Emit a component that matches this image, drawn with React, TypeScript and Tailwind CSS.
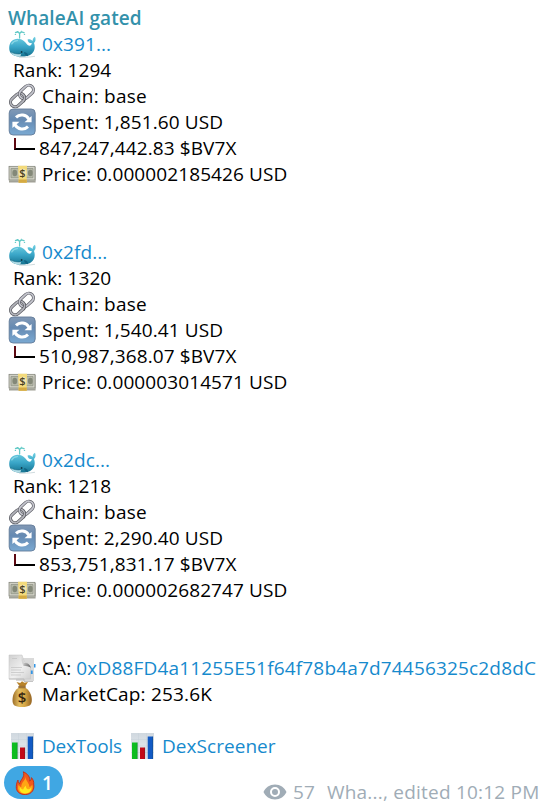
import React from "react";

const iconClass = "block h-[28px] w-[28px] shrink-0";

function Whale() {
  return (
    <svg className={iconClass} viewBox="0 0 28 28">
      <defs>
        <linearGradient id="whale" x1="0" y1="0" x2="0" y2="1">
          <stop offset="0" stopColor="#6fcfe2" />
          <stop offset=".5" stopColor="#3aa6c8" />
          <stop offset="1" stopColor="#14728f" />
        </linearGradient>
      </defs>
      <path d="M7.500 2.600c1.500-.9 3.200-.5 4.100 1c.8-1.600 2.700-2 4.600-.9M11.600 3.600V8" fill="none" stroke="#62c9c6" strokeWidth="1.300" strokeLinecap="round" />
      <path d="M9.400 1.500h.5M13.200 1.300h.5M7.200 4.500h.4M16.300 4.500h.4" stroke="#62c9c6" strokeWidth="1.100" strokeLinecap="round" />
      <path d="M1.200 18C1.200 12.400 4.600 8.800 9.700 8.800c5 0 7.400 3.200 10 6.300c2 1.200 3.900.5 4.100-2c-2.500.1-4.200-1.200-4.200-3.700c2.100-.4 3.800.2 5 1.600c0-2 .8-3.500 2.400-4.300c1 2.500.7 4.600-1 6.300c1.600 4.600.5 8.900-3.200 11.500c-2.300 1.600-5.500 2.200-10 2.100C5 26.500 1.200 23.600 1.200 18z" fill="url(#whale)" />
      <path d="M2 21.600c3.200 2.100 7.200 2.700 11 2.200c.2 1.400-.4 2.400-1.700 2.800C7 26.600 3.600 25 2 21.600z" fill="#b3dde6" />
      <path d="M2 21.500c3.300 2.100 7.200 2.700 11 2.200" fill="none" stroke="#1b6d88" strokeWidth=".7" />
      <path d="M16 22c2.700.2 4.200 1.700 4 4.200c-2.500-.5-3.900-1.900-4-4.200z" fill="#126585" />
      <circle cx="13.600" cy="22" r=".9" fill="#103847" />
      <path d="M3.800 13.800c1.300-2.200 3.200-3.200 5.600-3.200" fill="none" stroke="#a9e8f0" strokeWidth="1.400" strokeLinecap="round" opacity=".6" />
      <path d="M11 27.200c5 .3 10 0 16-.9" stroke="#bccbd0" strokeWidth=".7" fill="none" />
    </svg>
  );
}

function Chain() {
  return (
    <svg className={iconClass} viewBox="0 0 28 28" fill="none">
      <g transform="rotate(-42 14 14) translate(1.100 1.100) scale(.92)">
        <rect x="-1" y="9" width="17" height="10" rx="5" stroke="#595a60" strokeWidth="3.400" />
        <rect x="-1" y="9" width="17" height="10" rx="5" stroke="#b3b4bb" strokeWidth="1.900" />
        <rect x="12" y="9" width="17" height="10" rx="5" stroke="#5f6068" strokeWidth="3.400" />
        <rect x="12" y="9" width="17" height="10" rx="5" stroke="#c5c6ce" strokeWidth="1.900" />
        <path d="M11 19a5 5 0 0 0 5-5" stroke="#595a60" strokeWidth="3.400" />
        <path d="M10.600 19h.4a5 5 0 0 0 5-5v-.4" stroke="#b3b4bb" strokeWidth="1.900" />
      </g>
    </svg>
  );
}

function Refresh() {
  return (
    <svg className={iconClass} viewBox="0 0 28 28">
      <defs>
        <linearGradient id="refresh" x1="0" y1="0" x2="0" y2="1">
          <stop offset="0" stopColor="#8299b5" />
          <stop offset=".4" stopColor="#668ab2" />
          <stop offset="1" stopColor="#7aa9d2" />
        </linearGradient>
      </defs>
      <rect x="1.200" y="1" width="26" height="26" rx="4" fill="url(#refresh)" stroke="#627b98" strokeWidth=".9" />
      <path d="M8 9.300A8.200 8.200 0 0 1 20.900 11.300M20 18.700A8.200 8.200 0 0 1 7.100 16.700" fill="none" stroke="#fff" strokeWidth="3" />
      <path d="M23.600 7.900V14.300H16.500zM4.400 20.100V13.700H11.500z" fill="#fff" />
    </svg>
  );
}

function Money() {
  return (
    <svg className={iconClass} viewBox="0 0 28 28">
      <rect x="1" y="7" width="26.500" height="15.500" fill="#8b8c82" />
      <rect x="1" y="6.300" width="26" height="13.700" fill="#d0d0c5" stroke="#7c7e74" strokeWidth=".7" />
      <path d="M3 8.500h22v9.200H3z" fill="#b6b9a9" stroke="#8d9184" strokeWidth=".7" />
      <ellipse cx="6.800" cy="13" rx="2.400" ry="3.200" fill="#838878" />
      <ellipse cx="22.300" cy="13" rx="2.400" ry="3.200" fill="#838878" />
      <path d="M1 20.800h26M1 22.300h26" stroke="#dcdcd3" strokeWidth=".6" />
      <path d="M10 5.700h9l-.3 13.800v3.300h-8V19z" fill="#f3da7b" />
      <path d="M10.600 19.600h8.200v3.200h-8.200z" fill="#d5aa42" />
      <circle cx="14.500" cy="12.700" r="4" fill="#f5e6af" />
      <text x="14.500" y="16.700" textAnchor="middle" fill="#4c421f" fontFamily="Open Sans, sans-serif" fontWeight="600" fontSize="11">$</text>
    </svg>
  );
}

function Pages() {
  return (
    <svg className={iconClass} viewBox="0 0 28 28">
      <defs>
        <linearGradient id="paper" x1="0" y1="0" x2="1" y2="1">
          <stop offset="0" stopColor="#d0d0d0" />
          <stop offset=".55" stopColor="#f0f0f0" />
          <stop offset="1" stopColor="#cfcfcf" />
        </linearGradient>
        <linearGradient id="fold" x1="0" y1="0" x2="1" y2=".3">
          <stop offset="0" stopColor="#c9c9c9" />
          <stop offset="1" stopColor="#6c6c6c" />
        </linearGradient>
      </defs>
      <path d="M8 4h18v23H8z" fill="#dadada" />
      <path d="M26 10h1.500v3.500H26zM22.500 16.500h2.200v3.500h-2.200z" fill="#3295e5" />
      <path d="M1 1h13l2 6 6.500 6.500V25H1z" fill="url(#paper)" stroke="#c2c2c2" strokeWidth=".5" />
      <path d="M14 1c.5 3.600 1.300 6 2.500 7.500c3-.7 5.100 1.200 6.300 5.200c-2.300-1.700-4.800-2.200-7.500-1.900C13.500 8.600 13 5 14 1z" fill="#d4d4d4" />
      <path d="M15.500 9c3.300-.4 6 .4 7.500 4.700c-2.700-1.600-5-1.900-7.500-2z" fill="url(#fold)" />
      <path d="M4 4.500h5M3 13.500h11M3 16h10M3 18.500h13M3 21h10" stroke="#c2c2c2" strokeWidth=".7" />
      <path d="M1 25h15v2.500h9" fill="none" stroke="#b5b5b5" strokeWidth=".8" />
    </svg>
  );
}

function MoneyBag() {
  return (
    <svg className={iconClass} viewBox="0 0 28 28">
      <defs>
        <linearGradient id="bag" x1="0" y1="0" x2="1" y2="0">
          <stop offset="0" stopColor="#9c6d28" />
          <stop offset=".35" stopColor="#e4bf62" />
          <stop offset=".65" stopColor="#d6a644" />
          <stop offset="1" stopColor="#946322" />
        </linearGradient>
      </defs>
      <path d="M11.500 6L8.500 2l3.700 1L14 1.200l2.300 1.600L20 2l-3.300 5z" fill="#b8832b" />
      <path d="M11 7.500C7 9.500 4.500 14.500 4.500 20c0 5 2 7 9.500 7s9.800-2 9.800-7c0-5.500-2.800-10.500-6.800-12.500z" fill="url(#bag)" />
      <path d="M10.500 5.900h7v2.300h-7z" fill="#73471b" />
      <path d="M11 7h6" stroke="#e1bb60" strokeWidth=".8" />
      <text x="14" y="22.500" textAnchor="middle" fill="#35240f" fontFamily="Open Sans, sans-serif" fontWeight="600" fontSize="15">$</text>
    </svg>
  );
}

function Bars() {
  return (
    <svg className={iconClass} viewBox="0 0 28 28">
      <defs>
        <linearGradient id="chartPaper" x1="0" y1="0" x2="0" y2="1">
          <stop offset="0" stopColor="#d0d8df" />
          <stop offset="1" stopColor="#f0f3f5" />
        </linearGradient>
      </defs>
      <path d="M3 1h23v26H3z" fill="url(#chartPaper)" />
      <path d="M3 7.500h23M3 14h23M3 20.500h23M10.500 1v26M18.500 1v26" stroke="#c6d1d8" strokeWidth=".5" />
      <path d="M4 10.500h5.500V27H4z" fill="#0dbd20" />
      <path d="M12 15.500h5V27h-5z" fill="#c30b18" />
      <path d="M19.700 4.500h5.300V27h-5.300z" fill="#125ac4" />
      <path d="M9.300 10.500V27M16.900 15.500V27M24.700 4.500V27" stroke="#123d45" strokeOpacity=".4" strokeWidth=".7" />
    </svg>
  );
}

function Fire() {
  return (
    <svg className="block h-[24px] w-[24px]" viewBox="0 0 24 24">
      <path d="M10.300.8c4.600 2 7 5.500 6.400 9.300c1.200-.8 1.900-2 1.700-3.500c1.900 2 2.500 4.300 2.300 6.500c1 5.200-1.600 10.300-8.500 10.500C6.300 23.600 3 20.200 3.300 15.700c0-2.600.8-4.900 1.700-6.600c.1 1.700.6 2.900 1.700 3.700c.7-4.500 5.600-6.500 3.600-12z" fill="#f1591a" stroke="#c42c12" strokeWidth=".9" />
      <path d="M12.300 5.500c.5 4-4.200 5.700-4 10.500c-1.300-.3-2-1.100-2.600-2.300c-2 4 .1 9 6.300 9c6.300 0 8.700-4.700 7.200-9.200c-.7 1.600-1.700 2.300-3 2.300c.7-3-3.300-5.400-3.900-10.300z" fill="#ffa514" />
      <path d="M7 16c-1.100 3.300.8 6.200 5 6.400c4.100 0 6.500-2.500 6.300-5.900c-1.200 1.500-2.700 2.200-3.900 1.600c-1.200-.6-1.600-1.900-1.300-3.600c-1.500 1.100-2.300 2.500-3 4.100c-1.300-.5-2.400-1.200-3.100-2.600z" fill="#ffea1c" />
    </svg>
  );
}

function Eye() {
  return (
    <svg className="block h-[16px] w-[24px]" viewBox="0 0 24 16">
      <path fillRule="evenodd" d="M12 .5C6.800.5 2.400 3.600.5 8C2.400 12.400 6.800 15.500 12 15.500S21.600 12.400 23.500 8C21.600 3.600 17.200.5 12 .5zM12 13a5 5 0 1 1 0-10a5 5 0 0 1 0 10zM12 5a3 3 0 1 0 0 6a3 3 0 0 0 0-6z" fill="#a0acb6" />
    </svg>
  );
}

function Line({ icon, children }: { icon: React.ReactNode; children: React.ReactNode }) {
  return (
    <div className="flex h-[26px] items-center gap-[6px]">
      {icon}
      <span>{children}</span>
    </div>
  );
}

const link = "text-[#168acd]";

const trades = [
  { wallet: "0x391...", rank: "1294", spent: "1,851.60", amount: "847,247,442.83", price: "0.000002185426" },
  { wallet: "0x2fd...", rank: "1320", spent: "1,540.41", amount: "510,987,368.07", price: "0.000003014571" },
  { wallet: "0x2dc...", rank: "1218", spent: "2,290.40", amount: "853,751,831.17", price: "0.000002682747" },
];

export default function App() {
  return (
    <main className="h-[809px] w-[542px] overflow-hidden whitespace-nowrap bg-white pt-[5px] font-['Open_Sans',sans-serif] text-[19px] leading-[26px] tracking-[0.1px] text-black">
      <div className="pl-[8px]">
        <h1 className="h-[26px] font-semibold text-[#3391ab]">WhaleAI gated</h1>
        {trades.map((trade) => (
          <section key={trade.wallet} className="mb-[52px]">
            <Line icon={<Whale />}><a className={link}>{trade.wallet}</a></Line>
            <p className="pl-[5px]">Rank: {trade.rank}</p>
            <Line icon={<Chain />}><span className="tracking-[0.22px]">Chain: base</span></Line>
            <Line icon={<Refresh />}>Spent: {trade.spent} USD</Line>
            <div className="flex h-[26px] pl-[6px]">
              <div className="mr-[4px] mt-[3px] h-[12px] w-[21px] border-b-2 border-l-2 border-b-black border-l-[#5d0811]" />
              <span>{trade.amount} $BV7X</span>
            </div>
            <Line icon={<Money />}>Price: {trade.price} USD</Line>
          </section>
        ))}
        <Line icon={<Pages />}>CA: <a className={`${link} tracking-[0.17px]`}>0xD88FD4a11255E51f64f78b4a7d74456325c2d8dC</a></Line>
        <Line icon={<MoneyBag />}><span className="tracking-[0.18px]">MarketCap: 253.6K</span></Line>
        <nav className={`mt-[26px] flex gap-[6px] tracking-[-0.2px] ${link}`}>
          <Line icon={<Bars />}>DexTools</Line>
          <Line icon={<Bars />}><span className="tracking-[0.05px]">DexScreener</span></Line>
        </nav>
      </div>
      <footer className="flex items-start pl-[4px] pt-[7px]">
        <div className="flex h-[33px] w-[59px] items-center rounded-full bg-[#40a7e3] pl-[9px] text-white">
          <Fire />
          <span className="ml-[5px] font-semibold">1</span>
        </div>
        <div className="ml-[200px] flex items-center pt-[13px] text-[#a0acb6]">
          <Eye />
          <span className="ml-[6px]">57</span>
          <span className="ml-[12px] tracking-[0.22px]">Wha..., edited 10:12 PM</span>
        </div>
      </footer>
    </main>
  );
}
